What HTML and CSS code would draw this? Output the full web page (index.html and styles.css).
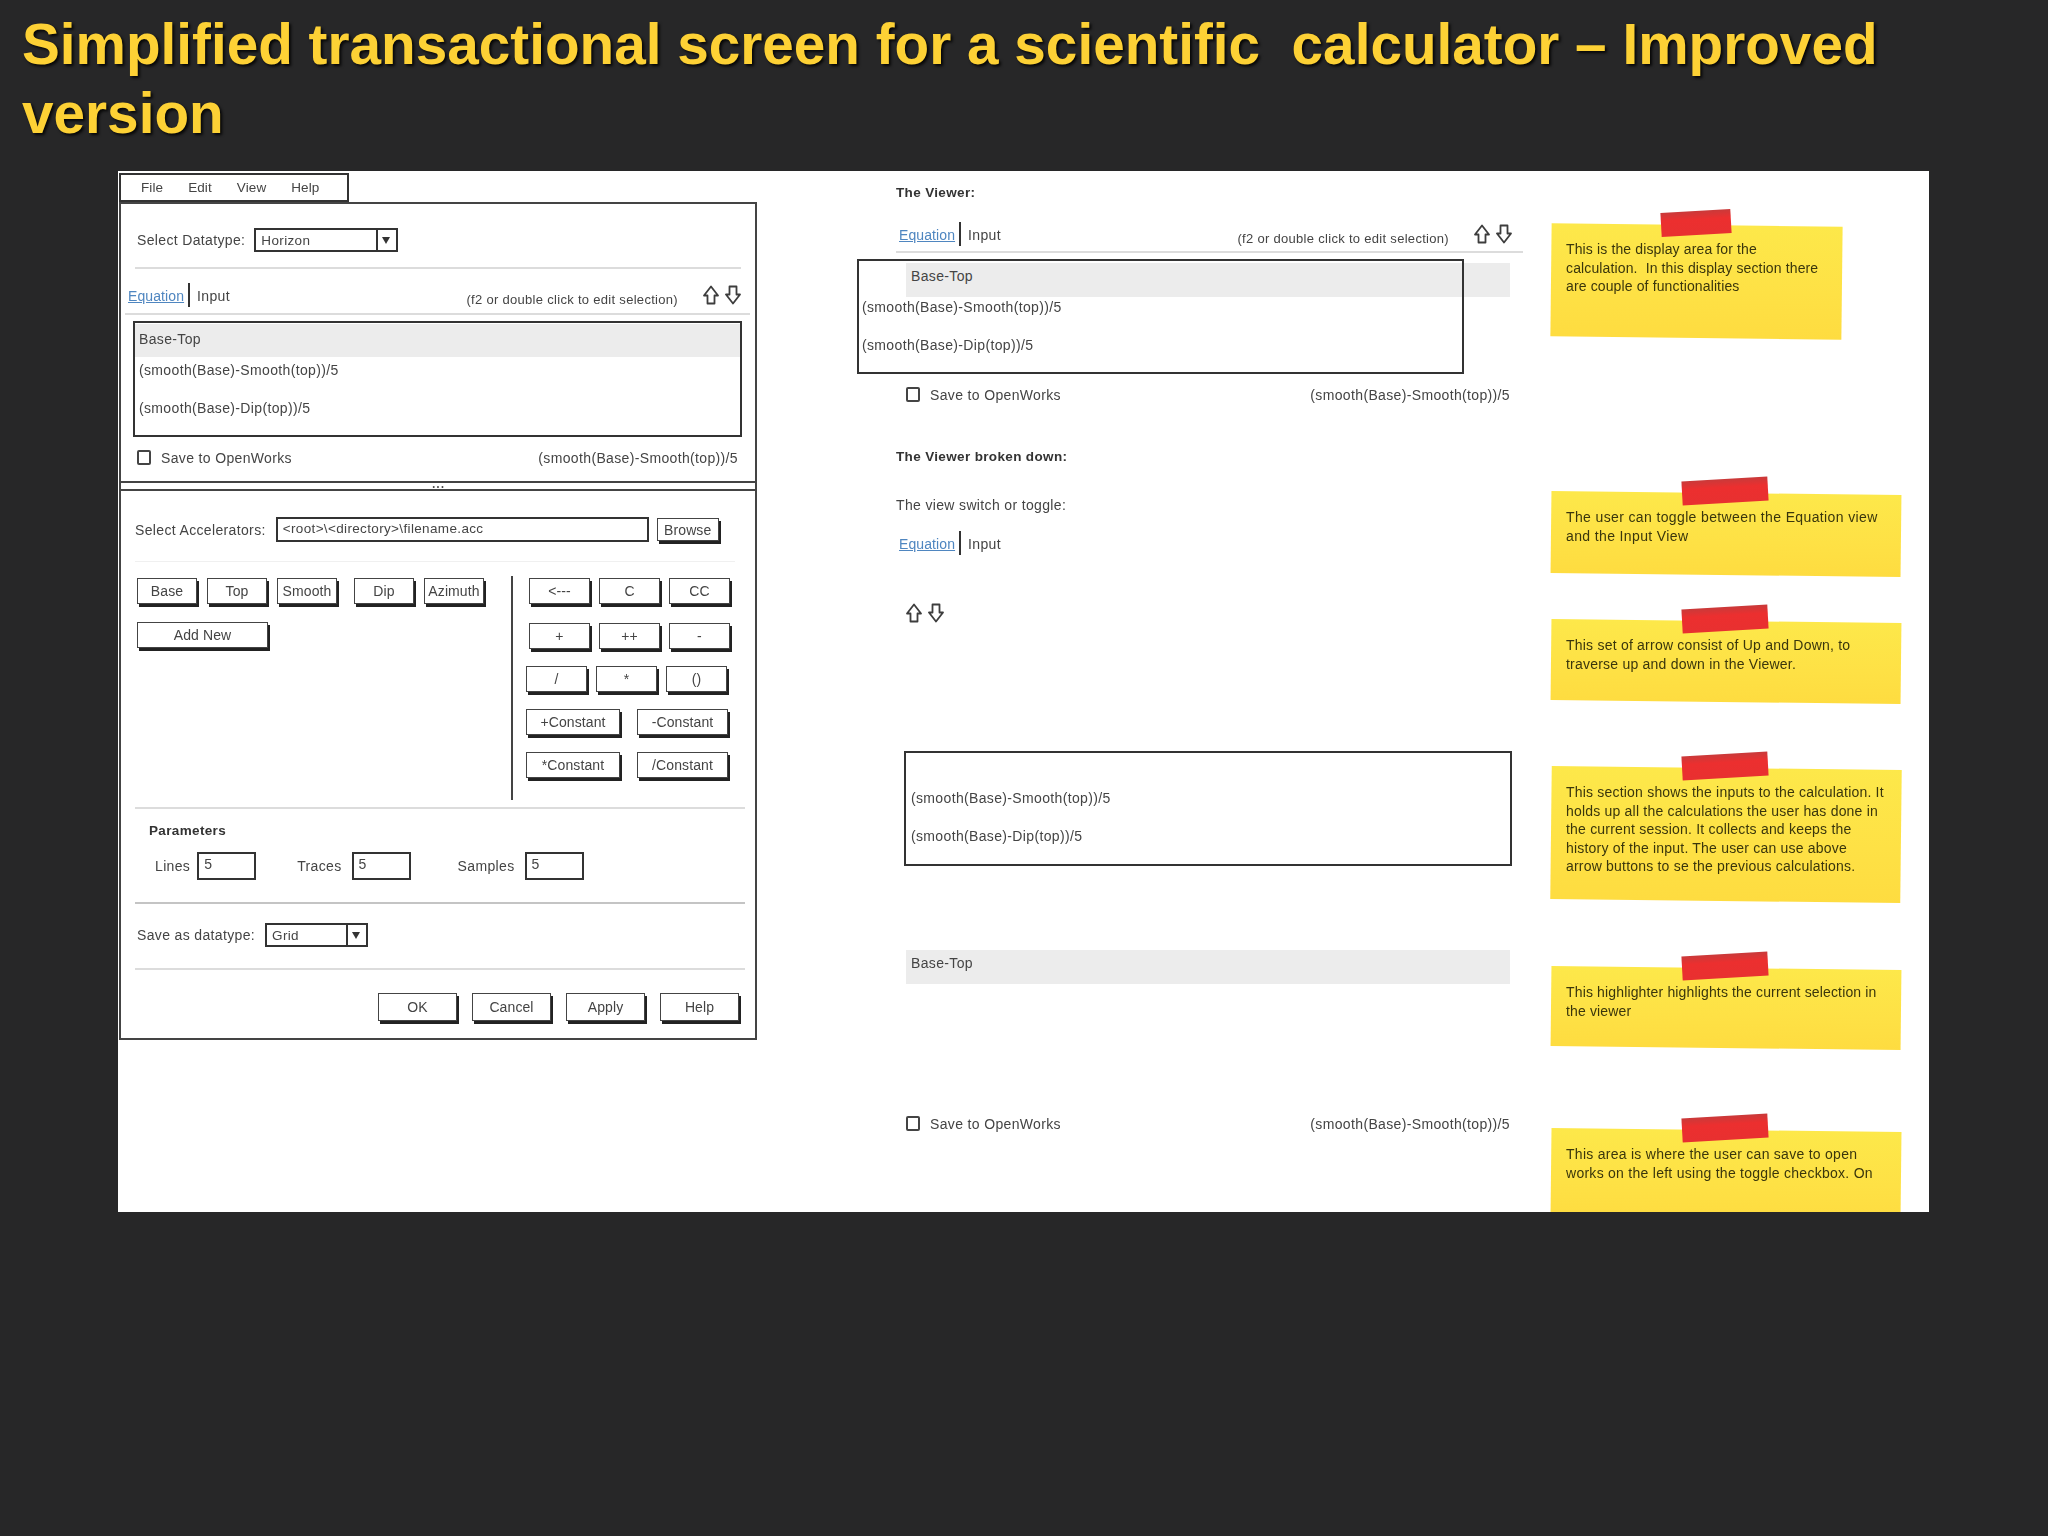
FILE: index.html
```html
<!DOCTYPE html>
<html lang="en">
<head>
<meta charset="utf-8">
<title>Simplified transactional screen</title>
<link rel="stylesheet" href="styles.css">
</head>
<body>
<svg class="defs" width="0" height="0" aria-hidden="true">
  <symbol id="arrow-up" viewBox="0 0 16 20"><path d="M8 1.5 L15 10.5 H11.5 V18.5 H4.5 V10.5 H1 Z" fill="none" stroke="#3d3d3d" stroke-width="1.8" stroke-linejoin="round"/></symbol>
  <symbol id="arrow-down" viewBox="0 0 16 20"><path d="M4.5 1.5 H11.5 V9.5 H15 L8 18.5 L1 9.5 H4.5 Z" fill="none" stroke="#3d3d3d" stroke-width="1.8" stroke-linejoin="round"/></symbol>
</svg>
<h1 class="title">Simplified transactional screen for a scientific  calculator – Improved version</h1>
<main class="canvas">
  <section class="col-dialog">
    <nav class="menu"><span>File</span><span>Edit</span><span>View</span><span>Help</span></nav>
    <div class="window">
      <div class="dt-row">
        <span class="lbl">Select Datatype:</span>
        <div class="select sel-horizon"><span>Horizon</span><i class="caret"></i></div>
      </div>
      <hr class="rule rule-a">
      <div class="tabs tabs-left">
        <a class="link">Equation</a><b class="bar"></b><span>Input</span>
        <span class="hint">(f2 or double click to edit selection)</span>
        <svg class="arr"><use href="#arrow-up"/></svg><svg class="arr"><use href="#arrow-down"/></svg>
      </div>
      <hr class="rule rule-b">
      <div class="list list-left">
        <div class="li li-sel">Base-Top</div>
        <div class="li">(smooth(Base)-Smooth(top))/5</div>
        <div class="li">(smooth(Base)-Dip(top))/5</div>
      </div>
      <div class="save save-left">
        <i class="check"></i><span>Save to OpenWorks</span>
        <span class="formula">(smooth(Base)-Smooth(top))/5</span>
      </div>
      <div class="splitter"><span>• • •</span></div>
      <div class="acc-row">
        <span class="lbl">Select Accelerators:</span>
        <div class="field">&lt;root&gt;\&lt;directory&gt;\filename.acc</div>
        <button class="btn btn-browse">Browse</button>
      </div>
      <hr class="rule rule-faint">
      <div class="pad">
        <div class="pad-vars">
          <div class="btn-row">
            <button class="btn w-var">Base</button>
            <button class="btn w-var">Top</button>
            <button class="btn w-var">Smooth</button>
            <button class="btn w-var gap-dip">Dip</button>
            <button class="btn w-var">Azimuth</button>
          </div>
          <button class="btn w-add">Add New</button>
        </div>
        <div class="pad-ops">
          <div class="btn-row ops"><button class="btn w-op">&lt;---</button><button class="btn w-op">C</button><button class="btn w-op">CC</button></div>
          <div class="btn-row ops"><button class="btn w-op">+</button><button class="btn w-op">++</button><button class="btn w-op">-</button></div>
          <div class="btn-row ops ops-shift"><button class="btn w-op">/</button><button class="btn w-op">*</button><button class="btn w-op">()</button></div>
          <div class="btn-row ops ops-shift ops-wide"><button class="btn w-cnst">+Constant</button><button class="btn w-cnst2">-Constant</button></div>
          <div class="btn-row ops ops-shift ops-wide"><button class="btn w-cnst">*Constant</button><button class="btn w-cnst2">/Constant</button></div>
        </div>
      </div>
      <hr class="rule rule-c">
      <div class="params-title">Parameters</div>
      <div class="params">
        <span class="lbl">Lines</span><div class="num">5</div>
        <span class="lbl p-traces">Traces</span><div class="num">5</div>
        <span class="lbl p-samples">Samples</span><div class="num">5</div>
      </div>
      <hr class="rule rule-d">
      <div class="saveas">
        <span class="lbl">Save as datatype:</span>
        <div class="select sel-grid"><span>Grid</span><i class="caret"></i></div>
      </div>
      <hr class="rule rule-e">
      <div class="actions">
        <button class="btn w-act">OK</button>
        <button class="btn w-act">Cancel</button>
        <button class="btn w-act">Apply</button>
        <button class="btn w-act">Help</button>
      </div>
    </div>
  </section>

  <section class="col-viewer">
    <div class="head head-1">The Viewer:</div>
    <div class="tabs tabs-mid">
      <a class="link">Equation</a><b class="bar"></b><span>Input</span>
      <span class="hint">(f2 or double click to edit selection)</span>
      <svg class="arr"><use href="#arrow-up"/></svg><svg class="arr"><use href="#arrow-down"/></svg>
    </div>
    <hr class="rule rule-mid">
    <div class="stage">
      <div class="hl">Base-Top</div>
      <div class="list overlay">
        <div class="li li-ghost"></div>
        <div class="li">(smooth(Base)-Smooth(top))/5</div>
        <div class="li">(smooth(Base)-Dip(top))/5</div>
      </div>
    </div>
    <div class="save save-mid">
      <i class="check"></i><span>Save to OpenWorks</span>
      <span class="formula">(smooth(Base)-Smooth(top))/5</span>
    </div>
    <div class="head head-2">The Viewer broken down:</div>
    <div class="plain">The view switch or toggle:</div>
    <div class="tabs tabs-solo">
      <a class="link">Equation</a><b class="bar"></b><span>Input</span>
    </div>
    <div class="arrows-solo">
      <svg class="arr"><use href="#arrow-up"/></svg><svg class="arr"><use href="#arrow-down"/></svg>
    </div>
    <div class="list list-solo">
      <div class="li li-ghost"></div>
      <div class="li">(smooth(Base)-Smooth(top))/5</div>
      <div class="li">(smooth(Base)-Dip(top))/5</div>
    </div>
    <div class="hl hl-solo">Base-Top</div>
    <div class="save save-solo">
      <i class="check"></i><span>Save to OpenWorks</span>
      <span class="formula">(smooth(Base)-Smooth(top))/5</span>
    </div>
  </section>

  <aside class="col-notes">
    <div class="note n1"><i class="tape"></i>This is the display area for the<br>calculation.  In this display section there<br>are couple of functionalities</div>
    <div class="note n2"><i class="tape"></i>The user can toggle between the Equation view<br>and the Input View</div>
    <div class="note n3"><i class="tape"></i>This set of arrow consist of Up and Down, to<br>traverse up and down in the Viewer.</div>
    <div class="note n4"><i class="tape"></i>This section shows the inputs to the calculation. It<br>holds up all the calculations the user has done in<br>the current session. It collects and keeps the<br>history of the input. The user can use above<br>arrow buttons to se the previous calculations.</div>
    <div class="note n5"><i class="tape"></i>This highlighter highlights the current selection in<br>the viewer</div>
    <div class="note n6"><i class="tape"></i>This area is where the user can save to open<br>works on the left using the toggle checkbox. On</div>
  </aside>
</main>
</body>
</html>
```
FILE: styles.css
```css
* { box-sizing: border-box; }
html, body { margin: 0; padding: 0; }
body {
  width: 2048px;
  height: 1536px;
  overflow: hidden;
  background: #272728;
  font-family: "Liberation Sans", Arial, sans-serif;
}
.defs { position: absolute; }

.title {
  margin: 0;
  height: 171px;
  padding: 10px 0 0 22px;
  font-size: 56.7px;
  line-height: 69px;
  font-weight: 700;
  color: #fdd135;
  white-space: pre-wrap;
  width: 1950px;
  text-shadow: 2px 2px 3px rgba(0, 0, 0, 0.85);
}

.canvas {
  width: 1811px;
  height: 1041px;
  margin-left: 118px;
  background: #fff;
  display: flex;
  overflow: hidden;
  color: #444;
  font-size: 14px;
  letter-spacing: 0.35px;
}
.canvas > section, .canvas > aside { filter: blur(0.7px); }

/* left dialog */
.col-dialog { width: 639px; margin-left: 1px; flex: none; padding-top: 2px; }
.menu {
  width: 230px; height: 29px;
  border: 2px solid #333;
  display: flex; align-items: center;
  padding-left: 20px; gap: 25px;
  font-size: 13.5px;
  letter-spacing: 0.1px;
  background: #fff;
}
.window {
  width: 638px;
  border: 2px solid #444;
  padding-bottom: 17px;
}
.lbl { white-space: nowrap; }

.dt-row { margin: 24px 0 0 16px; height: 24px; display: flex; align-items: center; gap: 9px; }
.select {
  border: 2px solid #333;
  height: 24px;
  display: flex; align-items: center;
  padding-left: 5px;
  font-size: 13.5px;
}
.select span { flex: 1; }
.sel-horizon { width: 144px; }
.sel-grid { width: 103px; height: 24px; }
.caret {
  width: 20px; height: 100%;
  border-left: 2px solid #333;
  position: relative; flex: none;
}
.caret::after {
  content: "";
  position: absolute; left: 4px; top: 7px;
  border: 4.5px solid transparent;
  border-top: 7px solid #333;
  border-bottom: 0;
}

.rule { border: 0; height: 2px; background: #dcdcdc; margin: 0; }
.rule-a { margin: 15px 0 0 14px; width: 606px; }
.rule-b { margin: 6px 0 0 4px; width: 625px; }
.rule-faint { margin: 19px 0 0 14px; width: 600px; height: 1px; background: #f0f0f0; }
.rule-c { margin: 7px 0 0 14px; width: 610px; }
.rule-d { margin: 22px 0 0 14px; width: 610px; background: #c4c4c4; }
.rule-e { margin: 21px 0 0 14px; width: 610px; }
.rule-mid { margin: 5px 0 0; width: 627px; }

.tabs { height: 24px; display: flex; align-items: center; white-space: nowrap; }
.tabs-left { margin: 14px 0 0 7px; width: 613px; }
.tabs-mid { margin: 20px 0 0 3px; width: 613px; }
.tabs-solo { margin: 17px 0 0 3px; width: 200px; }
.link { color: #4f86c0; text-decoration: underline; width: 55px; letter-spacing: 0.1px; margin-top: 2px; }
.tabs > span:not(.hint) { margin-top: 2px; }
.bar { width: 2px; height: 24px; background: #333; margin: 0 7px 0 5px; flex: none; }
.hint { margin-left: auto; margin-right: 25px; position: relative; top: 4px; font-size: 13px; letter-spacing: 0.3px; }
.arr { width: 16px; height: 20px; display: block; flex: none; }
.arr + .arr { margin-left: 6px; }

.list { border: 2.5px solid #333; height: 115px; }
.list-left { margin: 6px 0 0 12px; width: 609px; height: 116px; padding-top: 1px; }
.li { height: 26px; line-height: 26px; padding-left: 4px; margin-bottom: 12px; white-space: nowrap; }
.li-sel { height: 33px; line-height: 30px; background: #ececec; margin-bottom: 0; }
.li-ghost { height: 32px; margin-bottom: 0; }

.save { display: flex; align-items: center; height: 15px; white-space: nowrap; }
.check { width: 14px; height: 15px; border: 2px solid #444; border-radius: 2px; margin-right: 10px; flex: none; }
.formula { margin-left: auto; }
.save-left { margin: 13px 0 0 16px; width: 601px; }

.splitter {
  margin: 16px 0 0 -2px;
  width: 638px; height: 10px;
  border-top: 2px solid #444;
  border-bottom: 2px solid #444;
  display: flex; align-items: center; justify-content: center;
  font-size: 7px; line-height: 5px; letter-spacing: 0;
}

.acc-row { margin: 26px 0 0 14px; height: 25px; display: flex; align-items: center; }
.field { width: 373px; height: 25px; border: 2px solid #333; margin-left: 10px; padding-left: 5px; line-height: 20px; font-size: 13.5px; flex: none; }
.btn {
  display: block;
  padding: 0;
  height: 26px;
  background: #fff;
  border: 1.5px solid #444;
  box-shadow: 2px 3px 0 #222;
  font: inherit;
  letter-spacing: 0.1px;
  color: #444;
  text-align: center;
  line-height: 20px;
  flex: none;
}
.btn-browse { width: 62px; height: 23px; margin-left: 8px; }

.pad { display: flex; height: 224px; margin: 14px 0 0 0; }
.pad-vars { width: 392px; padding: 2px 0 0 16px; border-right: 2px solid #444; flex: none; }
.btn-row { display: flex; gap: 10px; }
.w-var { width: 60px; }
.gap-dip { margin-left: 7px; }
.w-add { width: 131px; margin-top: 18px; }
.pad-ops { padding: 2px 0 0 16px; }
.ops { gap: 9px; margin-bottom: 17px; }
.ops:nth-child(1) { margin-bottom: 19px; }
.ops-shift { margin-left: -3px; }
.ops-wide { gap: 17px; }
.w-op { width: 61px; }
.w-cnst { width: 94px; }
.w-cnst2 { width: 91px; }

.params-title { margin: 13px 0 0 28px; height: 18px; line-height: 18px; font-weight: 700; font-size: 13.5px; color: #333; }
.params { margin: 12px 0 0 34px; height: 28px; display: flex; align-items: center; }
.num { width: 59px; height: 28px; border: 2px solid #333; margin-left: 7px; padding-left: 5px; line-height: 20px; flex: none; }
.p-traces { margin-left: 41px; }
.p-traces + .num { margin-left: 10px; }
.p-samples { margin-left: 47px; }
.p-samples + .num { margin-left: 10px; }

.saveas { margin: 19px 0 0 16px; height: 24px; display: flex; align-items: center; gap: 10px; }
.actions { margin: 23px 0 0 257px; display: flex; gap: 15px; }
.w-act { width: 79px; height: 28px; }

/* middle column */
.col-viewer { width: 627px; margin-left: 138px; flex: none; padding-top: 13px; }
.head { height: 18px; line-height: 18px; font-weight: 700; font-size: 13.5px; color: #333; white-space: nowrap; }
.head-1 { margin: 0; }
.head-2 { margin: 46px 0 0; }
.plain { height: 18px; line-height: 18px; margin: 30px 0 0; white-space: nowrap; }
.stage { position: relative; margin-top: 10px; height: 111px; }
.hl { margin-left: 10px; width: 604px; height: 34px; line-height: 26px; background: #ececec; padding-left: 5px; }
.overlay {
  position: absolute;
  left: -39px; top: -4px;
  width: 607px;
}
.overlay .li-ghost { height: 33px; }
.overlay .li { padding-left: 3px; }
.save-mid { margin: 13px 0 0 10px; width: 604px; }
.arrows-solo { display: flex; margin: 48px 0 0 10px; }
.list-solo { margin: 128px 0 0 8px; width: 608px; }
.list-solo .li { padding-left: 5px; }
.hl-solo { margin-top: 84px; }
.save-solo { margin: 132px 0 0 10px; width: 604px; }

/* sticky notes */
.col-notes { flex: none; margin-left: 28px; display: flex; flex-direction: column; align-items: flex-start; isolation: isolate; }
.note {
  position: relative;
  flex: none;
  width: 350px;
  padding: 15px 0 0 15px;
  color: #3a360c;
  font-size: 14px;
  line-height: 18.5px;
  letter-spacing: 0.37px;
  white-space: pre;
}
.note::before {
  content: "";
  position: absolute;
  inset: 0;
  z-index: -1;
  background: linear-gradient(180deg, #fde84a 0%, #fee145 60%, #fedc40 100%);
  transform: rotate(0.65deg);
}
.tape {
  position: absolute;
  left: 131px; top: -14px;
  width: 86px; height: 24px;
  background: linear-gradient(180deg, #c93a3a 0%, #ec2f2f 35%, #e83030 100%);
  transform: rotate(-3.2deg);
}
.n1 { width: 291px; height: 113px; margin-top: 54px; letter-spacing: 0.13px; }
.n1 .tape { left: 110px; width: 70px; }
.n2 { height: 82px; margin-top: 155px; }
.n3 { height: 81px; margin-top: 46px; letter-spacing: 0.22px; }
.n4 { height: 133px; margin-top: 66px; letter-spacing: 0.2px; }
.n5 { height: 80px; margin-top: 67px; letter-spacing: 0.15px; }
.n6 { height: 90px; margin-top: 82px; letter-spacing: 0.27px; }
```
